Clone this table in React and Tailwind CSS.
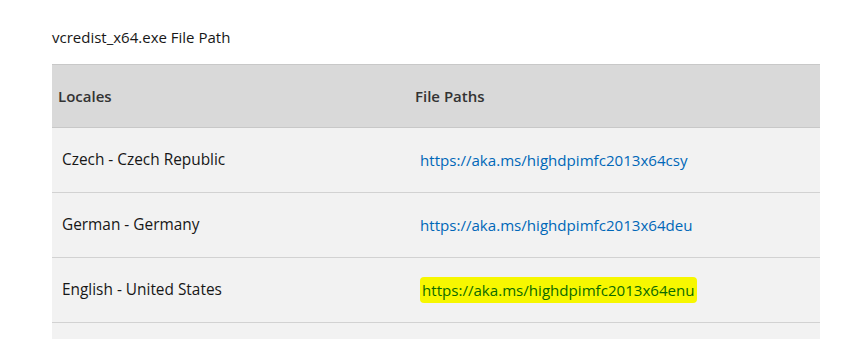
import React from "react";

const rows = [
  { locale: "Czech - Czech Republic", url: "https://aka.ms/highdpimfc2013x64csy" },
  { locale: "German - Germany", url: "https://aka.ms/highdpimfc2013x64deu" },
  { locale: "English - United States", url: "https://aka.ms/highdpimfc2013x64enu", marked: true },
];

const font = { fontFamily: '"Open Sans", "Noto Sans", sans-serif' };

export default function App() {
  return (
    <div className="h-[339px] overflow-hidden bg-white pl-[52px] pt-[27px] text-[15px] text-[#171717]" style={font}>
      <p className="leading-5">vcredist_x64.exe File Path</p>

      <div className="mt-[17px] w-[768px]">
        {/* header */}
        <div className="grid h-[64px] grid-cols-[357px_1fr] items-center border-y border-[#c8c8c8] bg-[#d9d9d9] font-semibold text-[#333]">
          <div className="pl-[6px]">Locales</div>
          <div className="pl-[6px]">File Paths</div>
        </div>

        {rows.map((r) => (
          <div
            key={r.url}
            className="grid h-[65px] grid-cols-[357px_1fr] items-center border-b border-[#d2d2d2] bg-[#f2f2f2]"
          >
            <div className="pl-[10px] text-[15.4px]">{r.locale}</div>
            <div className="pl-[11px] text-[15.1px]">
              {r.marked ? (
                <span className="rounded-[4px] bg-[#f7f700] px-[2px] py-[3px] text-[#0b6a00]">{r.url}</span>
              ) : (
                <a href="#" className="text-[#0067b8]">{r.url}</a>
              )}
            </div>
          </div>
        ))}
        <div className="h-[20px] bg-[#f2f2f2]" />
      </div>
    </div>
  );
}
